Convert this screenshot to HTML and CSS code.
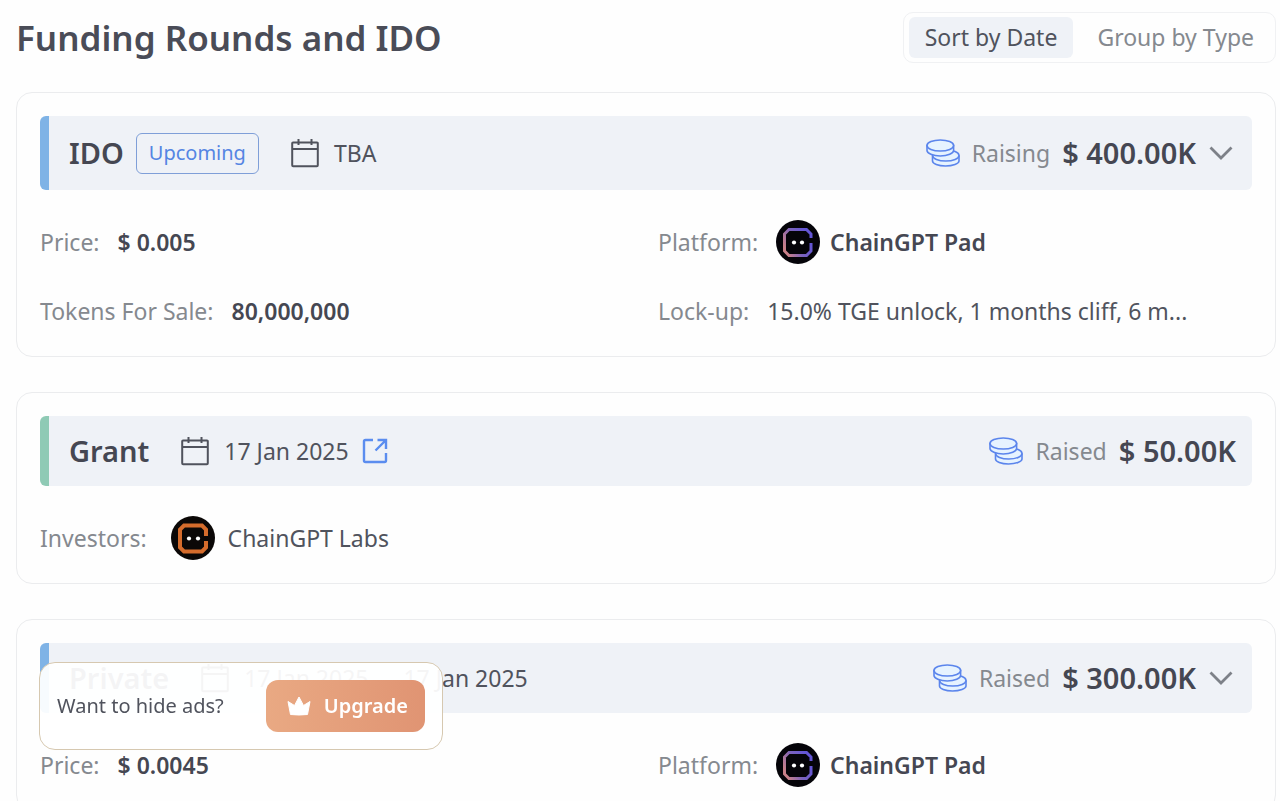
FILE: index.html
```html
<!DOCTYPE html>
<html lang="en">
<head>
<meta charset="utf-8">
<meta name="viewport" content="width=device-width, initial-scale=1">
<title>Funding Rounds and IDO</title>
<link rel="stylesheet" href="styles.css">
</head>
<body>
<svg class="sprite" aria-hidden="true">
  <defs>
    <linearGradient id="pad-gradient" x1="0" y1="0.7" x2="0.9" y2="0.3">
      <stop offset="0" stop-color="#c98088"/>
      <stop offset="0.5" stop-color="#7a62bc"/>
      <stop offset="1" stop-color="#6456d6"/>
    </linearGradient>
    <symbol id="calendar" viewBox="0 0 28 30">
      <path d="M2 4.500h24a.8.8 0 0 1 .8.8v22a1 1 0 0 1-1 1H2.200a1 1 0 0 1-1-1v-22a.8.8 0 0 1 .8-.8zM1.200 11h25.600M7.500 1v6M20.500 1v6" fill="none" stroke="currentColor" stroke-width="2"/>
    </symbol>
    <symbol id="coins" viewBox="0 0 34 28">
      <g fill="#e6f3ff" stroke="#5b85ec" stroke-width="1.600">
        <path d="M6.500 17v5c0 2.600 5.700 5 13 5s13.500-2.400 13.500-5v-5z"/>
        <ellipse cx="19.800" cy="16.500" rx="13.200" ry="5.500"/>
        <path d="M1 6.500v5c0 2.800 5.900 5.500 13.300 5.500S27.600 14.300 27.600 11.500v-5z"/>
        <ellipse cx="14.300" cy="6.500" rx="13.300" ry="5.500"/>
      </g>
    </symbol>
    <symbol id="chevron" viewBox="0 0 24 14">
      <path d="M1.500 1.500L12 12 22.500 1.500" fill="none" stroke="currentColor" stroke-width="2.800"/>
    </symbol>
    <symbol id="external" viewBox="0 0 26 26">
      <path d="M11 2H3.500A1.500 1.500 0 0 0 2 3.500v19A1.500 1.500 0 0 0 3.500 24h19a1.500 1.500 0 0 0 1.500-1.500V15M15.500 2H24v9M24 2L13.500 12.500" fill="none" stroke="currentColor" stroke-width="2.400"/>
    </symbol>
    <symbol id="crown" viewBox="0 0 24 20">
      <path d="M3.500 18.500L1 5.500l6.500 4L12 1l4.500 8.500 6.500-4-2.500 13q-8.500 1-17 0z" fill="currentColor" stroke="currentColor" stroke-linejoin="round"/>
    </symbol>
    <symbol id="pad" viewBox="0 0 44 44">
      <circle cx="22" cy="22" r="22" fill="#050409"/>
      <path d="M35 18v-4l-4.500-4.500H13L8.500 14v17l4.500 4.500h17.500l4.500-4.500v-8" fill="none" stroke="url(#pad-gradient)" stroke-width="3"/>
      <circle cx="18" cy="22.500" r="2.100" fill="#fff"/><circle cx="26" cy="22.500" r="2.100" fill="#fff"/>
    </symbol>
    <symbol id="labs" viewBox="0 0 44 44">
      <circle cx="22" cy="22" r="22" fill="#0b0807"/>
      <path d="M35 20v-6.500l-4-4H13l-4 4v18l4 4h18l4-4V25" fill="none" stroke="#d56c2c" stroke-width="4"/>
      <circle cx="18" cy="22.500" r="2.100" fill="#fff"/><circle cx="27" cy="22.500" r="2.100" fill="#fff"/>
    </symbol>
  </defs>
</svg>

<main class="page">
  <header class="page-head">
    <h1 class="title">Funding Rounds and IDO</h1>
    <div class="switch">
      <button class="switch-item active" type="button">Sort by Date</button>
      <button class="switch-item" type="button">Group by Type</button>
    </div>
  </header>

  <section class="card">
    <div class="round round-tall blue">
      <h2 class="round-name">IDO</h2>
      <span class="badge">Upcoming</span>
      <div class="date"><svg class="icon-calendar"><use href="#calendar"/></svg><span>TBA</span></div>
      <div class="raise">
        <svg class="icon-coins"><use href="#coins"/></svg>
        <span class="label">Raising</span>
        <strong class="amount">$ 400.00K</strong>
        <button class="toggle" type="button" aria-label="Toggle details"><svg class="icon-chevron"><use href="#chevron"/></svg></button>
      </div>
    </div>
    <div class="details">
      <div class="field"><span class="label">Price:</span><strong class="value">$ 0.005</strong></div>
      <div class="field"><span class="label">Platform:</span><a class="org" href="#"><svg class="logo"><use href="#pad"/></svg><strong class="value">ChainGPT Pad</strong></a></div>
      <div class="field"><span class="label">Tokens For Sale:</span><strong class="value">80,000,000</strong></div>
      <div class="field"><span class="label">Lock-up:</span><span>15.0% TGE unlock, 1 months cliff, 6 m...</span></div>
    </div>
  </section>

  <section class="card">
    <div class="round green">
      <h2 class="round-name">Grant</h2>
      <div class="date"><svg class="icon-calendar"><use href="#calendar"/></svg><span>17 Jan 2025</span><a class="source" href="#" aria-label="Open announcement"><svg class="icon-external"><use href="#external"/></svg></a></div>
      <div class="raise">
        <svg class="icon-coins"><use href="#coins"/></svg>
        <span class="label">Raised</span>
        <strong class="amount">$ 50.00K</strong>
      </div>
    </div>
    <div class="details">
      <div class="field investors"><span class="label">Investors:</span><a class="org" href="#"><svg class="logo"><use href="#labs"/></svg><span>ChainGPT Labs</span></a></div>
    </div>
  </section>

  <section class="card">
    <div class="round blue">
      <h2 class="round-name">Private</h2>
      <div class="date"><svg class="icon-calendar"><use href="#calendar"/></svg><span>17 Jan 2025 — 17 Jan 2025</span></div>
      <div class="raise">
        <svg class="icon-coins"><use href="#coins"/></svg>
        <span class="label">Raised</span>
        <strong class="amount">$ 300.00K</strong>
        <button class="toggle" type="button" aria-label="Toggle details"><svg class="icon-chevron"><use href="#chevron"/></svg></button>
      </div>
    </div>
    <div class="details">
      <div class="field"><span class="label">Price:</span><strong class="value">$ 0.0045</strong></div>
      <div class="field"><span class="label">Platform:</span><a class="org" href="#"><svg class="logo"><use href="#pad"/></svg><strong class="value">ChainGPT Pad</strong></a></div>
    </div>
  </section>
</main>

<aside class="promo">
  <span>Want to hide ads?</span>
  <button class="upgrade" type="button"><svg class="icon-crown"><use href="#crown"/></svg>Upgrade</button>
</aside>
</body>
</html>
```
FILE: styles.css
```css
* {
  box-sizing: border-box;
}

body {
  margin: 0;
  background: #fefefe;
  color: #50535d;
  font-family: "Noto Sans", "Open Sans", sans-serif;
  font-size: 23px;
  line-height: 32px;
}

button {
  font: inherit;
  color: inherit;
  border: 0;
  background: none;
  padding: 0;
  cursor: pointer;
}

a {
  color: inherit;
  text-decoration: none;
}

svg {
  display: block;
  flex: none;
}

.sprite {
  position: absolute;
  width: 0;
  height: 0;
}

.page {
  display: flex;
  flex-direction: column;
  gap: 35px;
  padding: 12px 4px 0 16px;
}

.page-head {
  display: flex;
  align-items: center;
  justify-content: space-between;
  margin-bottom: -6px;
}

.title {
  margin: 0;
  font-size: 35px;
  line-height: 48px;
  font-weight: 600;
  color: #4a4c57;
}

.switch {
  display: flex;
  gap: 8px;
  padding: 4px 5px;
  border: 1px solid #f0f1f3;
  border-radius: 10px;
}

.switch-item {
  height: 41px;
  padding: 0 16px 2px;
  border-radius: 6px;
  color: #85898f;
}

.switch-item.active {
  background: #eff2f7;
  color: #50535d;
}

.card {
  padding: 23px;
  border: 1px solid #ebecee;
  border-radius: 16px;
}

.round {
  display: flex;
  align-items: center;
  min-height: 70px;
  padding: 0 16px 0 20px;
  border-left: 9px solid;
  border-radius: 6px;
  background: #eff2f7;
}

.round-tall {
  min-height: 74px;
}

.blue {
  border-left-color: #7fb3e6;
}

.green {
  border-left-color: #8fcab5;
}

.round-name {
  margin: 0;
  font-size: 29px;
  font-weight: 600;
  color: #454752;
}

.badge {
  margin-left: 12px;
  padding: 3px 12px 4px;
  border: 1px solid #7f9fd8;
  border-radius: 6px;
  color: #5585e3;
  font-size: 20px;
}

.date {
  display: flex;
  align-items: center;
  gap: 15px;
  margin-left: 32px;
}

.icon-calendar {
  width: 28px;
  height: 30px;
}

.source {
  margin-left: -2px;
  color: #5b8def;
}

.icon-external {
  width: 26px;
  height: 26px;
}

.raise {
  display: flex;
  align-items: center;
  gap: 12px;
  margin-left: auto;
}

.icon-coins {
  width: 34px;
  height: 28px;
}

.label {
  color: #85898f;
}

.amount {
  font-size: 29px;
  font-weight: 600;
  color: #454752;
}

.toggle {
  margin: 0 3px 0 1px;
  color: #7d8188;
}

.icon-chevron {
  width: 24px;
  height: 14px;
}

.details {
  display: grid;
  grid-template-columns: 1fr 1fr;
  gap: 25px 24px;
  padding-top: 30px;
}

.field {
  display: flex;
  align-items: center;
  gap: 18px;
  min-height: 44px;
  white-space: nowrap;
}

.investors {
  gap: 24px;
}

.org {
  display: flex;
  align-items: center;
  gap: 10px;
}

.investors .org {
  gap: 13px;
}

.logo {
  width: 44px;
  height: 44px;
}

.value {
  font-weight: 600;
  color: #454752;
}

.promo {
  position: fixed;
  left: 39px;
  bottom: 51px;
  display: flex;
  align-items: center;
  gap: 42px;
  padding: 17px;
  border: 1px solid #d6c8b0;
  border-radius: 16px;
  background: rgba(255, 255, 255, 0.94);
  font-size: 20px;
}

.upgrade {
  display: flex;
  align-items: center;
  gap: 13px;
  height: 52px;
  padding: 0 17px 0 21px;
  border-radius: 12px;
  background: linear-gradient(90deg, #e9a983, #e09473);
  color: #fff;
  font-weight: 600;
}

.icon-crown {
  width: 24px;
  height: 20px;
}
```
